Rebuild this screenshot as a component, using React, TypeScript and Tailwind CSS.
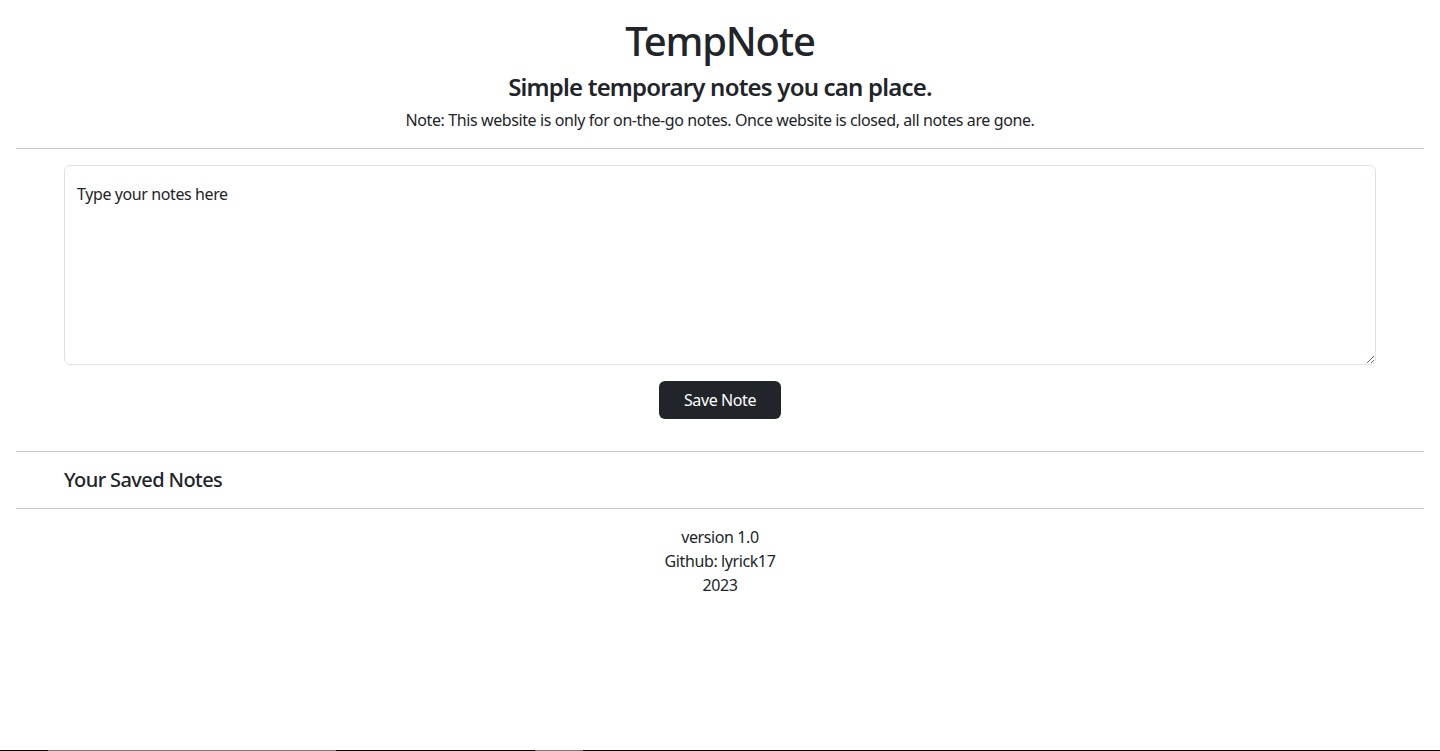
export default function App() {
  return (
    <div
      className="min-h-[751px] flex flex-col bg-white text-[#212529] tracking-[-0.4px]"
      style={{ fontFamily: '"Noto Sans", "Open Sans", sans-serif' }}
    >
      <div className="flex-1 px-4">
        {/* header */}
        <header className="text-center pt-[17px]">
          <h1 className="text-[40px] leading-[48px] font-medium tracking-[-1.2px] mb-[7px]">TempNote</h1>
          <h4 className="text-[24px] leading-[29px] font-semibold tracking-[-0.8px] mb-[7px]">
            Simple temporary notes you can place.
          </h4>
          <p className="text-[16px] leading-6 mb-4">
            Note: This website is only for on-the-go notes. Once website is closed, all notes are gone.
          </p>
        </header>

        <hr className="border-t border-[#c8c9ca]" />

        {/* editor */}
        <div className="px-12 pt-4">
          <textarea
            className="block w-full h-[200px] rounded-md border border-[#dee2e6] px-3 py-4 text-[16px] leading-6 tracking-[-0.4px] text-[#212529] placeholder:text-[#212529] outline-none"
            placeholder="Type your notes here"
          />
          <div className="flex justify-center mt-4">
            <button className="w-[122px] h-[38px] rounded-md bg-[#212529] text-white text-[16px]">
              Save Note
            </button>
          </div>
        </div>

        <hr className="border-t border-[#c8c9ca] mt-8" />

        <div className="px-12 py-4">
          <h5 className="text-[20px] leading-6 font-medium tracking-[-0.6px]">Your Saved Notes</h5>
        </div>

        <hr className="border-t border-[#c8c9ca]" />

        <footer className="text-center text-[16px] leading-6 pt-4">
          <p>version 1.0</p>
          <p>Github: lyrick17</p>
          <p>2023</p>
        </footer>
      </div>

      {/* bottom edge strip */}
      <div className="flex h-px">
        <div className="w-[48px] bg-black" />
        <div className="w-[288px] bg-[#777]" />
        <div className="w-[199px] bg-black" />
        <div className="w-[48px] bg-[#777]" />
        <div className="flex-1 bg-black" />
      </div>
    </div>
  );
}
